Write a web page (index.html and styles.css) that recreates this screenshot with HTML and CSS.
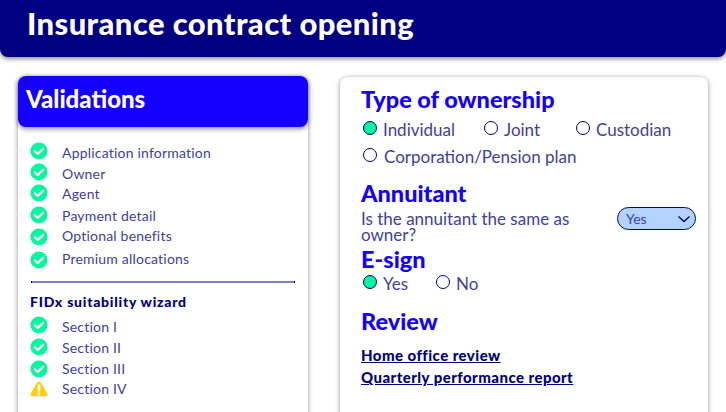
FILE: index.html
```html
<!DOCTYPE html>
<html lang="en">
<head>
<meta charset="utf-8">
<title>Insurance contract opening</title>
<link rel="stylesheet" href="styles.css">
</head>
<body>
<svg class="defs" width="0" height="0" aria-hidden="true">
  <symbol id="ok" viewBox="0 0 18 18">
    <circle cx="9" cy="9" r="8.500" fill="#00f99c"/>
    <path d="M5 9.300l2.800 2.700L13 6.800" fill="none" stroke="#fff" stroke-width="2.400" stroke-linecap="round" stroke-linejoin="round"/>
  </symbol>
  <symbol id="warn" viewBox="0 0 18 18">
    <path d="M9 3.200L15.800 14.500H2.200z" fill="#ffd000" stroke="#ffd000" stroke-width="3.400" stroke-linejoin="round"/>
    <path d="M9 5.800v4.600" stroke="#fff" stroke-width="2.600" stroke-linecap="round"/>
    <circle cx="9" cy="13.700" r="1.400" fill="#fff"/>
  </symbol>
</svg>
<header class="top"><h1>Insurance contract opening</h1></header>
<main class="layout">
  <aside class="card side">
    <h2 class="side-head">Validations</h2>
    <div class="side-body">
      <ul class="checks">
        <li class="r21"><svg class="ic"><use href="#ok"/></svg><span class="d1">Application information</span></li>
        <li class="r21"><svg class="ic"><use href="#ok"/></svg><span class="d1">Owner</span></li>
        <li class="r22"><svg class="ic"><use href="#ok"/></svg><span>Agent</span></li>
        <li class="r22"><svg class="ic"><use href="#ok"/></svg><span>Payment detail</span></li>
        <li class="r23"><svg class="ic"><use href="#ok"/></svg><span class="dm2">Optional benefits</span></li>
        <li class="r23"><svg class="ic"><use href="#ok"/></svg><span class="dm2">Premium allocations</span></li>
      </ul>
      <hr class="rule">
      <h3 class="wizard">FIDx suitability wizard</h3>
      <ul class="checks">
        <li class="r22"><svg class="ic"><use href="#ok"/></svg><span class="d1">Section I</span></li>
        <li class="r22"><svg class="ic"><use href="#ok"/></svg><span>Section II</span></li>
        <li class="r20"><svg class="ic"><use href="#ok"/></svg><span class="dm1">Section III</span></li>
        <li class="r21"><svg class="ic"><use href="#warn"/></svg><span class="dm1">Section IV</span></li>
      </ul>
    </div>
  </aside>
  <section class="card form">
    <h2 class="title">Type of ownership</h2>
    <div class="radios r-own">
      <span class="radio w-ind"><i class="dot on"></i>Individual</span>
      <span class="radio w-joint"><i class="dot"></i>Joint</span>
      <span class="radio"><i class="dot"></i>Custodian</span>
      <span class="radio corp"><i class="dot"></i>Corporation/Pension plan</span>
    </div>
    <h2 class="title t-ann">Annuitant</h2>
    <div class="q">
      <p>Is the annuitant the same as owner?</p>
      <div class="select">Yes<svg width="14" height="8" viewBox="0 0 14 8"><path d="M1.500 1.500L7 6.500l5.500-5" fill="none" stroke="#000080" stroke-width="1.400"/></svg></div>
    </div>
    <h2 class="title t-sign">E-sign</h2>
    <div class="radios r-sign">
      <span class="radio w-yes"><i class="dot on"></i>Yes</span>
      <span class="radio"><i class="dot"></i>No</span>
    </div>
    <h2 class="title t-rev">Review</h2>
    <a class="link" href="#">Home office review</a>
    <a class="link" href="#">Quarterly performance report</a>
  </section>
</main>
</body>
</html>
```
FILE: styles.css
```css
* { box-sizing: border-box; }
html, body { margin: 0; height: 412px; overflow: hidden; background: #fff; }
body { font-family: Lato, "Open Sans", sans-serif; color: #40409f; }
.defs { position: absolute; }
h1, h2, h3, p, ul { margin: 0; padding: 0; }
ul { list-style: none; }

.top { height: 57px; background: #000080; border-radius: 0 0 8px 8px; box-shadow: 0 2px 4px rgba(0,0,0,.45); padding: 5px 0 0 27px; }
h1 { font-size: 31px; line-height: 36px; font-weight: 900; color: #fff; letter-spacing: .4px; }

.layout { display: flex; align-items: flex-start; gap: 32px; height: 355px; overflow: hidden; padding: 19px 0 0 18px; }
.card { background: #fff; border-radius: 8px; box-shadow: 0 1px 5px rgba(0,0,0,.45); }
.side { width: 290px; height: 400px; flex: none; }
.side-head { height: 51px; background: #1400ff; border-radius: 8px; box-shadow: 0 2px 5px rgba(0,0,0,.45); color: #fff; font-size: 24px; font-weight: 900; line-height: 46px; padding-left: 8px; }
.side-body { padding: 15px 13px 0 12px; }

.checks li { display: flex; align-items: flex-start; font-size: 14px; line-height: 20px; letter-spacing: .2px; }
.d1 { margin-top: 1px; }
.dm1 { margin-top: -1px; }
.dm2 { margin-top: -2px; }
.r20 { height: 20px; } .r21 { height: 21px; } .r22 { height: 22px; } .r23 { height: 23px; }
.ic { width: 18px; height: 18px; margin: 0 14px 0 0; flex: none; }
.rule { border: 0; height: 2px; background: #7f7fc4; margin: 7px 0 0 1px; width: 264px; border-left: 1px solid #000080; border-right: 1px solid #000080; }
.wizard { font-size: 14px; font-weight: 900; color: #000080; letter-spacing: .75px; line-height: 18px; margin: 10px 0 5px; }

.form { width: 368px; height: 400px; flex: none; padding: 8px 12px 0 21px; margin-top: 1px; }
.title { font-size: 23.500px; font-weight: 900; color: #1400ff; line-height: 29px; }
.radios { display: flex; flex-wrap: wrap; font-size: 17px; line-height: 24px; }
.radio { display: flex; align-items: center; height: 27px; }
.dot { width: 14px; height: 14px; border: 1.500px solid #000080; border-radius: 50%; margin: -3px 6px 0 2px; flex: none; background: #fff; }
.dot.on { background: #00f99c; }
.w-ind { width: 121px; }
.w-joint { width: 92px; }
.corp { width: 100%; }
.corp .dot { margin-right: 7px; }
.r-own { margin-top: 2px; }
.t-ann { margin-top: 9px; }
.q { display: flex; justify-content: space-between; align-items: flex-start; font-size: 17px; line-height: 16px; margin-top: -1px; }
.q p { width: 230px; padding-top: 4px; }
.select { width: 79px; height: 23px; border: 1.500px solid #000080; border-radius: 12px; background: #b3d4ff; font-size: 14px; line-height: 20px; padding: 0 4px 0 8px; display: flex; align-items: center; justify-content: space-between; }
.t-sign { margin-top: 3px; line-height: 27px; }
.r-sign { margin-top: -2px; }
.r-sign .radio { height: 25px; }
.w-yes { width: 73px; }
.t-rev { margin: 11px 0 9px; line-height: 28px; }
.link { display: block; font-size: 15px; font-weight: 900; color: #000080; line-height: 22px; letter-spacing: .45px; }
```
